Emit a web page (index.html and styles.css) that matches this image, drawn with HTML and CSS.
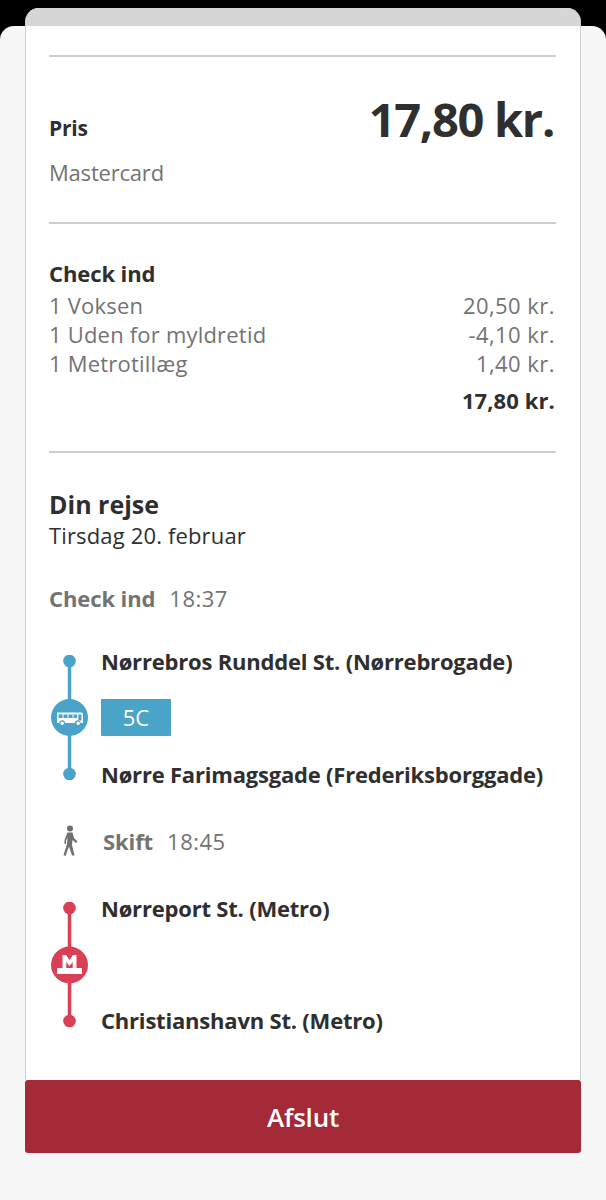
FILE: index.html
```html
<!DOCTYPE html>
<html lang="da">
<head>
<meta charset="utf-8">
<title>Din rejse</title>
<link rel="stylesheet" href="styles.css">
</head>
<body>
<div class="sheet">
  <main class="card">
    <div class="tab"></div>
    <div class="content">
      <section class="section price">
        <div class="price-row">
          <span class="price-label">Pris</span>
          <span class="price-value">17,80 kr.</span>
        </div>
        <div class="method">Mastercard</div>
      </section>
      <section class="section receipt">
        <h3 class="receipt-title">Check ind</h3>
        <div class="line-row"><span>1 Voksen</span><span class="amount">20,50 kr.</span></div>
        <div class="line-row"><span>1 Uden for myldretid</span><span class="amount">-4,10 kr.</span></div>
        <div class="line-row"><span>1 Metrotillæg</span><span class="amount">1,40 kr.</span></div>
        <div class="total">17,80 kr.</div>
      </section>
      <section class="journey">
        <h2 class="journey-title">Din rejse</h2>
        <div class="journey-date">Tirsdag 20. februar</div>
        <div class="event check"><b>Check ind</b><span>18:37</span></div>
        <div class="leg bus-leg">
          <svg class="leg-line" width="40" height="125" viewBox="0 0 40 125">
            <path d="M20.500 6V119" stroke="#4aa3c9" stroke-width="3.500"/>
            <circle cx="20.500" cy="6" r="6.300" fill="#4aa3c9"/>
            <circle cx="20.500" cy="119" r="6.300" fill="#4aa3c9"/>
            <circle cx="20.500" cy="62.500" r="18.500" fill="#4aa3c9"/>
            <path d="M8 57.500h24.500q1.500 0 1.500 2v8.500h-2.500a2.800 2.800 0 0 0-5.600 0H16a2.800 2.800 0 0 0-5.600 0H8z" fill="#fff"/>
            <path d="M9.500 59.500h4v3.500h-4zM14.500 59.500h4v3.500h-4zM19.500 59.500h4v3.500h-4zM24.500 59.500h3.500v3.500h-3.500zM29.300 59.500h3.200v6h-3.200z" fill="#4aa3c9"/>
            <circle cx="13.200" cy="68.300" r="1.700" fill="#fff"/>
            <circle cx="29.200" cy="68.300" r="1.700" fill="#fff"/>
          </svg>
          <div class="leg-body">
            <div class="stop">Nørrebros Runddel St. (Nørrebrogade)</div>
            <div class="badge">5C</div>
            <div class="stop">Nørre Farimagsgade (Frederiksborggade)</div>
          </div>
        </div>
        <div class="event walk">
          <svg class="walk-icon" width="16" height="32" viewBox="0 0 16 32">
            <circle cx="8" cy="3.500" r="3" fill="#6f6f6f"/>
            <path d="M5.500 7.500h5l1.500 5.500 3.500 3.500-1.500 1.500-3.500-3-.5 5 2.500 10.500h-2.500l-3-9-3.500 9.500-2-1 3.500-11 .5-6.500-1.500 3v3.500H2.500V15z" fill="#6f6f6f"/>
          </svg>
          <b>Skift</b><span>18:45</span>
        </div>
        <div class="leg metro-leg">
          <svg class="leg-line" width="40" height="125" viewBox="0 0 40 125">
            <path d="M20.500 6V119" stroke="#d93f55" stroke-width="3.500"/>
            <circle cx="20.500" cy="6" r="6.300" fill="#d93f55"/>
            <circle cx="20.500" cy="119" r="6.300" fill="#d93f55"/>
            <circle cx="20.500" cy="63" r="18.500" fill="#d93f55"/>
            <path d="M13.500 53h14v13H33v6H8v-6h5.500z" fill="#fff"/>
            <path d="M17 53l3.500 5 3.500-5zM17.300 66v-6l3.200 4 3.200-4v6z" fill="#d93f55"/>
          </svg>
          <div class="leg-body">
            <div class="stop">Nørreport St. (Metro)</div>
            <div class="stop">Christianshavn St. (Metro)</div>
          </div>
        </div>
      </section>
    </div>
  </main>
  <button class="finish" type="button">Afslut</button>
</div>
</body>
</html>
```
FILE: styles.css
```css
* { box-sizing: border-box; }
html, body { margin: 0; height: 1200px; overflow: hidden; background: #000; }
body { font-family: "Open Sans", "Noto Sans", sans-serif; color: #2f2f2f; padding-top: 26px; }
.sheet {
  height: 1174px;
  background: #f7f7f7;
  border-radius: 14px 14px 0 0;
  padding: 0 25px 47px;
  display: flex;
  flex-direction: column;
}
.card {
  flex: 1;
  margin-top: -18px;
  background: #fff;
  border-radius: 14px 14px 0 0;
  border-left: 1px solid #cfcfcf;
  border-right: 1px solid #cfcfcf;
  overflow: hidden;
}
.tab { height: 18px; background: #d6d6d6; margin: 0 -1px; }
.content { padding: 29px 24px 0 23px; }
.section { border-top: 2px solid #cdcdcd; }
.price { height: 167px; padding-top: 32px; }
.price-row { display: flex; justify-content: space-between; align-items: flex-end; height: 60px; }
.price-label { font-size: 21px; font-weight: 700; letter-spacing: -0.2px; line-height: 28px; margin-bottom: 7px; }
.price-value { font-size: 47px; font-weight: 700; letter-spacing: -1.3px; line-height: 60px; padding-right: 2px; }
.method { font-size: 22px; line-height: 30px; color: #737373; letter-spacing: -0.2px; margin-top: 8px; }
.receipt { height: 229px; padding-top: 34px; }
.receipt-title { margin: 0 0 3px; font-size: 22px; font-weight: 700; line-height: 30px; letter-spacing: -0.1px; }
.line-row { display: flex; justify-content: space-between; font-size: 22px; line-height: 29px; color: #737373; letter-spacing: 0.2px; padding-right: 1px; }
.amount { letter-spacing: 0.45px; }
.total { text-align: right; font-size: 22px; font-weight: 700; line-height: 29px; letter-spacing: 0.1px; margin-top: 8px; padding-right: 1px; }
.journey { border-top: 2px solid #cdcdcd; padding-top: 35px; }
.journey-title { margin: 0; font-size: 25px; font-weight: 700; line-height: 32px; }
.journey-date { font-size: 22px; line-height: 30px; letter-spacing: 0.15px; }
.event { display: flex; align-items: center; font-size: 22px; color: #737373; }
.event b { letter-spacing: -0.1px; margin-right: 14px; }
.event span { letter-spacing: 0.5px; }
.check { height: 30px; margin-top: 33px; }
.leg { display: flex; gap: 10px; margin-top: 42px; }
.leg-line { flex: none; }
.leg-body { flex: 1; display: flex; flex-direction: column; justify-content: space-between; height: 141px; margin-top: -8px; margin-bottom: -8px; padding-left: 2px; }
.stop { font-size: 22px; font-weight: 700; line-height: 28px; letter-spacing: -0.2px; white-space: nowrap; }
.badge {
  width: 70px; height: 37px; background: #4aa3c9; color: #fff; border-radius: 1px;
  font-size: 22px; line-height: 37px; text-align: center;
}
.walk { height: 32px; margin-top: 45px; }
.walk-icon { flex: none; margin: 0 25px 0 13px; overflow: visible; }
.metro-leg { margin-top: 45px; }
.metro-leg .leg-body { height: 140px; margin-top: -8px; margin-bottom: -7px; }
.finish {
  flex: none; height: 73px; border: 0; border-radius: 3px; background: #a32a36; color: #fff;
  font-family: inherit; font-size: 26px; font-weight: 600; letter-spacing: -0.2px; padding: 0;
}
```
